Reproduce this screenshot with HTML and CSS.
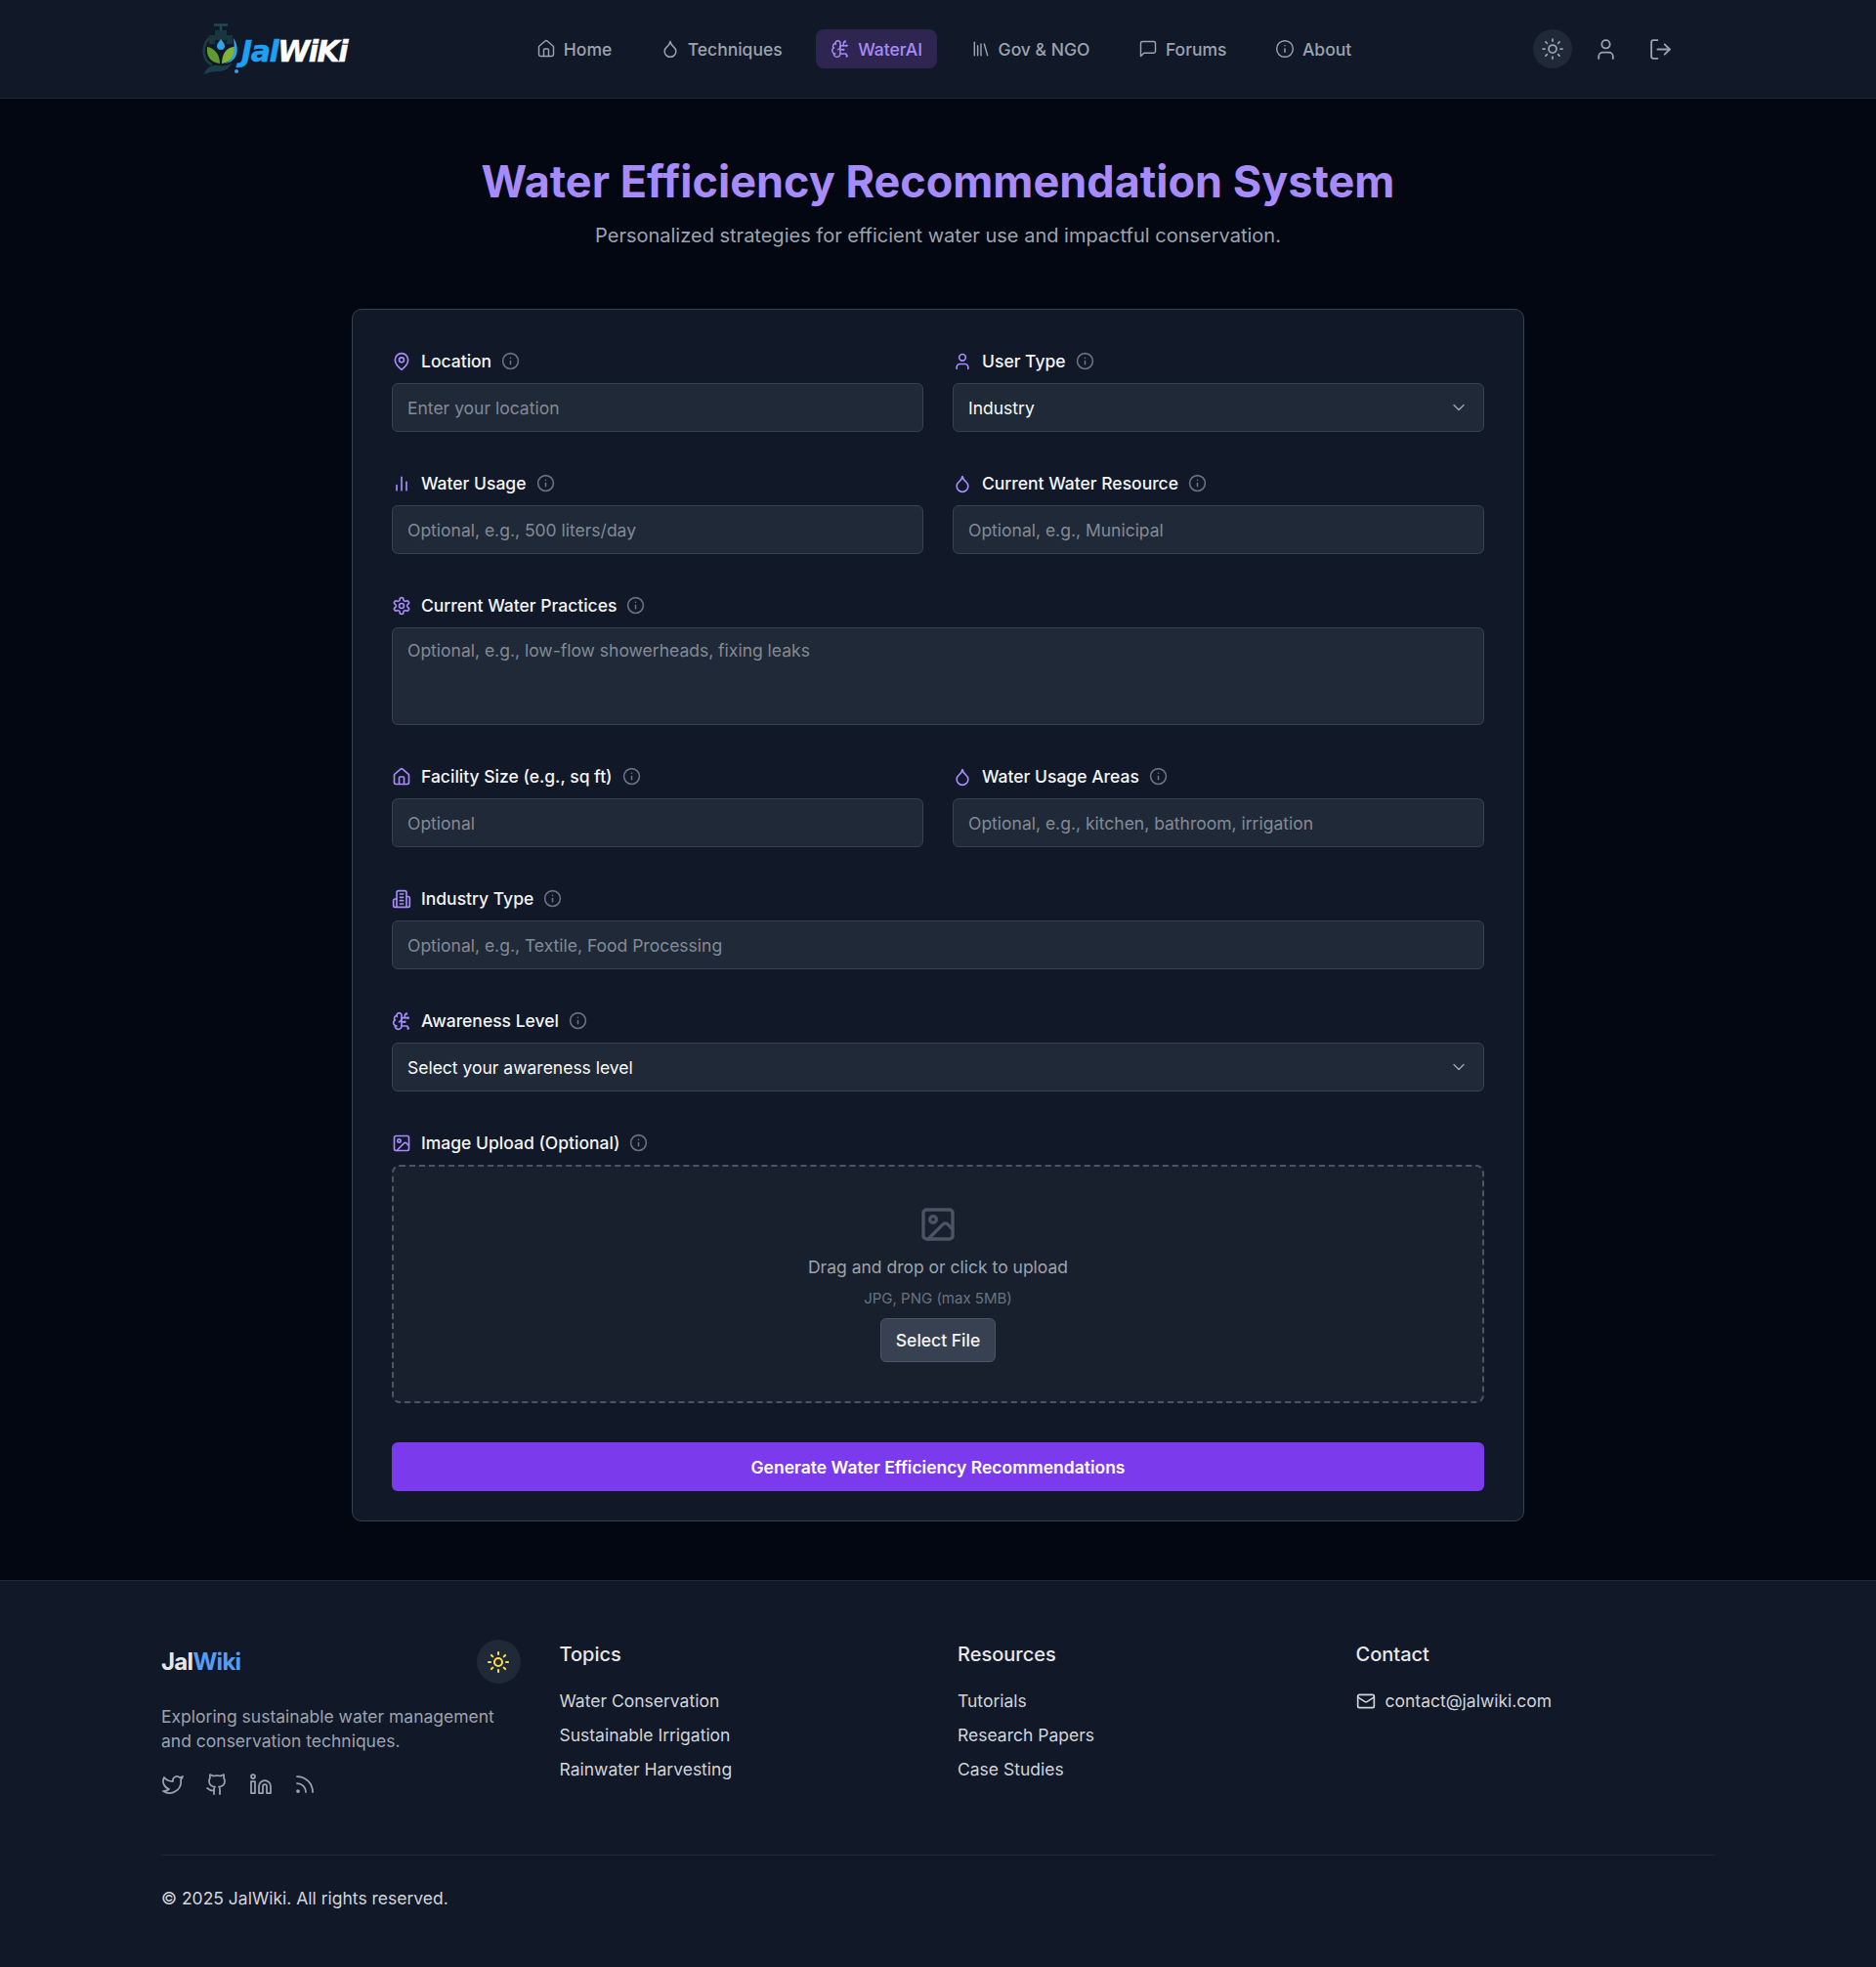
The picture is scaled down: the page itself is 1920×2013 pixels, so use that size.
FILE: index.html
```html
<!DOCTYPE html>
<html lang="en">
<head>
    <meta charset="UTF-8">
    <title>Water Efficiency Recommendation System</title>
    <link rel="stylesheet" href="styles.css">
</head>
<body>
    <svg class="sprite" width="0" height="0">
        <defs>
            <symbol id="i-home" viewBox="0 0 24 24"><path d="M15 21v-8a1 1 0 0 0-1-1h-4a1 1 0 0 0-1 1v8"/><path d="M3 10a2 2 0 0 1 .709-1.528l7-6a2 2 0 0 1 2.582 0l7 6A2 2 0 0 1 21 10v9a2 2 0 0 1-2 2H5a2 2 0 0 1-2-2z"/></symbol>
            <symbol id="i-drop" viewBox="0 0 24 24"><path d="M12 22a7 7 0 0 0 7-7c0-2-1-3.9-3-5.5s-3.5-4-4-6.5c-.5 2.5-2 4.9-4 6.5C6 11.1 5 13 5 15a7 7 0 0 0 7 7z"/></symbol>
            <symbol id="i-brain" viewBox="0 0 24 24"><path d="M12 5a3 3 0 1 0-5.997.125 4 4 0 0 0-2.526 5.77 4 4 0 0 0 .556 6.588A4 4 0 1 0 12 18Z"/><path d="M9 13a4.5 4.5 0 0 0 3-4"/><path d="M6.003 5.125A3 3 0 0 0 6.401 6.5"/><path d="M3.477 10.896a4 4 0 0 1 .585-.396"/><path d="M6 18a4 4 0 0 1-1.967-.516"/><path d="M12 13h4"/><path d="M12 18h6a2 2 0 0 1 2 2v1"/><path d="M12 8h8"/><path d="M16 8V5a2 2 0 0 1 2-2"/><circle cx="16" cy="13" r=".5"/><circle cx="18" cy="3" r=".5"/><circle cx="20" cy="21" r=".5"/><circle cx="20" cy="8" r=".5"/></symbol>
            <symbol id="i-library" viewBox="0 0 24 24"><path d="m16 6 4 14"/><path d="M12 6v14"/><path d="M8 8v12"/><path d="M4 4v16"/></symbol>
            <symbol id="i-chat" viewBox="0 0 24 24"><path d="M21 15a2 2 0 0 1-2 2H7l-4 4V5a2 2 0 0 1 2-2h14a2 2 0 0 1 2 2z"/></symbol>
            <symbol id="i-info" viewBox="0 0 24 24"><circle cx="12" cy="12" r="10"/><path d="M12 16v-4"/><path d="M12 8h.01"/></symbol>
            <symbol id="i-sun" viewBox="0 0 24 24"><circle cx="12" cy="12" r="4"/><path d="M12 2v2"/><path d="M12 20v2"/><path d="m4.93 4.93 1.41 1.41"/><path d="m17.66 17.66 1.41 1.41"/><path d="M2 12h2"/><path d="M20 12h2"/><path d="m6.34 17.66-1.41 1.41"/><path d="m19.07 4.93-1.41 1.41"/></symbol>
            <symbol id="i-user" viewBox="0 0 24 24"><path d="M19 21v-2a4 4 0 0 0-4-4H9a4 4 0 0 0-4 4v2"/><circle cx="12" cy="7" r="4"/></symbol>
            <symbol id="i-logout" viewBox="0 0 24 24"><path d="M9 21H5a2 2 0 0 1-2-2V5a2 2 0 0 1 2-2h4"/><path d="m16 17 5-5-5-5"/><path d="M21 12H9"/></symbol>
            <symbol id="i-pin" viewBox="0 0 24 24"><path d="M20 10c0 6-8 12-8 12s-8-6-8-12a8 8 0 0 1 16 0Z"/><circle cx="12" cy="10" r="3"/></symbol>
            <symbol id="i-bars" viewBox="0 0 24 24"><path d="M18 20V10"/><path d="M12 20V4"/><path d="M6 20v-6"/></symbol>
            <symbol id="i-gear" viewBox="0 0 24 24"><path d="M12.22 2h-.44a2 2 0 0 0-2 2v.18a2 2 0 0 1-1 1.73l-.43.25a2 2 0 0 1-2 0l-.15-.08a2 2 0 0 0-2.73.73l-.22.38a2 2 0 0 0 .73 2.73l.15.1a2 2 0 0 1 1 1.72v.51a2 2 0 0 1-1 1.74l-.15.09a2 2 0 0 0-.73 2.73l.22.38a2 2 0 0 0 2.73.73l.15-.08a2 2 0 0 1 2 0l.43.25a2 2 0 0 1 1 1.73V20a2 2 0 0 0 2 2h.44a2 2 0 0 0 2-2v-.18a2 2 0 0 1 1-1.73l.43-.25a2 2 0 0 1 2 0l.15.08a2 2 0 0 0 2.73-.73l.22-.39a2 2 0 0 0-.73-2.73l-.15-.08a2 2 0 0 1-1-1.74v-.5a2 2 0 0 1 1-1.74l.15-.09a2 2 0 0 0 .73-2.73l-.22-.38a2 2 0 0 0-2.73-.73l-.15.08a2 2 0 0 1-2 0l-.43-.25a2 2 0 0 1-1-1.73V4a2 2 0 0 0-2-2z"/><circle cx="12" cy="12" r="3"/></symbol>
            <symbol id="i-building" viewBox="0 0 24 24"><path d="M6 22V4a2 2 0 0 1 2-2h8a2 2 0 0 1 2 2v18Z"/><path d="M6 12H4a2 2 0 0 0-2 2v6a2 2 0 0 0 2 2h2"/><path d="M18 9h2a2 2 0 0 1 2 2v9a2 2 0 0 1-2 2h-2"/><path d="M10 6h4"/><path d="M10 10h4"/><path d="M10 14h4"/><path d="M10 18h4"/></symbol>
            <symbol id="i-image" viewBox="0 0 24 24"><rect x="3" y="3" width="18" height="18" rx="2"/><circle cx="9" cy="9" r="2"/><path d="m21 15-3.086-3.086a2 2 0 0 0-2.828 0L6 21"/></symbol>
            <symbol id="i-chevron" viewBox="0 0 24 24"><path d="m6 9 6 6 6-6"/></symbol>
            <symbol id="i-twitter" viewBox="0 0 24 24"><path d="M22 4s-.7 2.1-2 3.4c1.6 10-9.4 17.3-18 11.6 2.2.1 4.4-.6 6-2C3 15.5.5 9.6 3 5c2.2 2.6 5.6 4.1 9 4-.9-4.2 4-6.6 7-3.8 1.1 0 3-1.2 3-1.2z"/></symbol>
            <symbol id="i-github" viewBox="0 0 24 24"><path d="M15 22v-4a4.8 4.8 0 0 0-1-3.5c3 0 6-2 6-5.5.08-1.25-.27-2.48-1-3.5.28-1.15.28-2.35 0-3.5 0 0-1 0-3 1.5-2.64-.5-5.36-.5-8 0C6 2 5 2 5 2c-.3 1.15-.3 2.35 0 3.5A5.403 5.403 0 0 0 4 9c0 3.5 3 5.5 6 5.5-.39.49-.68 1.05-.85 1.65-.17.6-.22 1.23-.15 1.85v4"/><path d="M9 18c-4.51 2-5-2-7-2"/></symbol>
            <symbol id="i-linkedin" viewBox="0 0 24 24"><path d="M16 8a6 6 0 0 1 6 6v7h-4v-7a2 2 0 0 0-2-2 2 2 0 0 0-2 2v7h-4v-7a6 6 0 0 1 6-6z"/><rect x="2" y="9" width="4" height="12"/><circle cx="4" cy="4" r="2"/></symbol>
            <symbol id="i-rss" viewBox="0 0 24 24"><path d="M4 11a9 9 0 0 1 9 9"/><path d="M4 4a16 16 0 0 1 16 16"/><circle cx="5" cy="19" r="1"/></symbol>
            <symbol id="i-mail" viewBox="0 0 24 24"><rect x="2" y="4" width="20" height="16" rx="2"/><path d="m22 7-8.97 5.7a1.94 1.94 0 0 1-2.06 0L2 7"/></symbol>
        </defs>
    </svg>

    <header class="site-header">
        <div class="header-inner">
            <a class="logo" href="#">
                <svg class="logo-mark" viewBox="0 0 40 56" width="40" height="56">
                    <path d="M13 3.500h14M20 3.500v6" stroke="#1f4a52" stroke-width="2.500" fill="none"/>
                    <path d="M14 9h12v5h6v9h-6v-4H14v4H8v-9h6z" fill="#17363d"/>
                    <path d="M8 17C3 22 1 30 4 37c1 3 4 6 7 7" fill="none" stroke="#1d3b44" stroke-width="2.500"/>
                    <path d="M20 18c2 3 4 4.500 4 7a4 4 0 0 1-8 0c0-2.500 2-4 4-7z" fill="#2aa5e8"/>
                    <path d="M19 43C9 42 5 35 6 26c7 1 13 7 13 17z" fill="#5f9a2e"/>
                    <path d="M21 43c0-10 5-17 13-17 1 8-3 16-13 17z" fill="#7fb33a"/>
                    <path d="M3 54c2-7 8-10 14-9 6 1 11 0 14-3-2 7-8 9-14 9-5 0-9 1-14 3z" fill="#1a3f49"/>
                    <path d="M24 43c8-3 11-10 9-26 6 9 6 24-9 26z" fill="#2aa5e8"/>
                    <circle cx="36" cy="51" r="2" fill="#2aa5e8"/>
                </svg>
                <span class="logo-text"><span class="logo-jal">Jal</span>WiKi</span>
            </a>
            <nav class="main-nav">
                <a class="nav-link" href="#"><svg class="icon"><use href="#i-home"/></svg>Home</a>
                <a class="nav-link" href="#"><svg class="icon"><use href="#i-drop"/></svg>Techniques</a>
                <a class="nav-link active" href="#"><svg class="icon"><use href="#i-brain"/></svg>WaterAI</a>
                <a class="nav-link" href="#"><svg class="icon"><use href="#i-library"/></svg>Gov &amp; NGO</a>
                <a class="nav-link" href="#"><svg class="icon"><use href="#i-chat"/></svg>Forums</a>
                <a class="nav-link" href="#"><svg class="icon"><use href="#i-info"/></svg>About</a>
            </nav>
            <div class="header-actions">
                <button class="theme-btn" type="button"><svg class="icon"><use href="#i-sun"/></svg></button>
                <a class="action-link" href="#"><svg class="icon"><use href="#i-user"/></svg></a>
                <a class="action-link" href="#"><svg class="icon"><use href="#i-logout"/></svg></a>
            </div>
        </div>
    </header>

    <main class="page-main">
        <h1 class="page-title">Water Efficiency Recommendation System</h1>
        <p class="page-subtitle">Personalized strategies for efficient water use and impactful conservation.</p>

        <form class="rec-form">
            <div class="form-grid">
                <div class="field">
                    <label class="field-label"><svg class="icon label-icon"><use href="#i-pin"/></svg>Location<svg class="icon info-icon"><use href="#i-info"/></svg></label>
                    <input class="control" type="text" placeholder="Enter your location">
                </div>
                <div class="field">
                    <label class="field-label"><svg class="icon label-icon"><use href="#i-user"/></svg>User Type<svg class="icon info-icon"><use href="#i-info"/></svg></label>
                    <div class="select-wrap">
                        <select class="control">
                            <option>Industry</option>
                        </select>
                        <svg class="icon select-arrow"><use href="#i-chevron"/></svg>
                    </div>
                </div>
                <div class="field">
                    <label class="field-label"><svg class="icon label-icon"><use href="#i-bars"/></svg>Water Usage<svg class="icon info-icon"><use href="#i-info"/></svg></label>
                    <input class="control" type="text" placeholder="Optional, e.g., 500 liters/day">
                </div>
                <div class="field">
                    <label class="field-label"><svg class="icon label-icon"><use href="#i-drop"/></svg>Current Water Resource<svg class="icon info-icon"><use href="#i-info"/></svg></label>
                    <input class="control" type="text" placeholder="Optional, e.g., Municipal">
                </div>
                <div class="field span-2">
                    <label class="field-label"><svg class="icon label-icon"><use href="#i-gear"/></svg>Current Water Practices<svg class="icon info-icon"><use href="#i-info"/></svg></label>
                    <textarea class="control control-area" placeholder="Optional, e.g., low-flow showerheads, fixing leaks"></textarea>
                </div>
                <div class="field">
                    <label class="field-label"><svg class="icon label-icon"><use href="#i-home"/></svg>Facility Size (e.g., sq ft)<svg class="icon info-icon"><use href="#i-info"/></svg></label>
                    <input class="control" type="text" placeholder="Optional">
                </div>
                <div class="field">
                    <label class="field-label"><svg class="icon label-icon"><use href="#i-drop"/></svg>Water Usage Areas<svg class="icon info-icon"><use href="#i-info"/></svg></label>
                    <input class="control" type="text" placeholder="Optional, e.g., kitchen, bathroom, irrigation">
                </div>
                <div class="field span-2">
                    <label class="field-label"><svg class="icon label-icon"><use href="#i-building"/></svg>Industry Type<svg class="icon info-icon"><use href="#i-info"/></svg></label>
                    <input class="control" type="text" placeholder="Optional, e.g., Textile, Food Processing">
                </div>
                <div class="field span-2">
                    <label class="field-label"><svg class="icon label-icon"><use href="#i-brain"/></svg>Awareness Level<svg class="icon info-icon"><use href="#i-info"/></svg></label>
                    <div class="select-wrap">
                        <select class="control">
                            <option>Select your awareness level</option>
                        </select>
                        <svg class="icon select-arrow"><use href="#i-chevron"/></svg>
                    </div>
                </div>
                <div class="field span-2">
                    <label class="field-label"><svg class="icon label-icon"><use href="#i-image"/></svg>Image Upload (Optional)<svg class="icon info-icon"><use href="#i-info"/></svg></label>
                    <div class="upload-box">
                        <svg class="icon upload-icon"><use href="#i-image"/></svg>
                        <p class="upload-text">Drag and drop or click to upload</p>
                        <p class="upload-hint">JPG, PNG (max 5MB)</p>
                        <button class="upload-btn" type="button">Select File</button>
                    </div>
                </div>
            </div>
            <button class="submit-btn" type="submit">Generate Water Efficiency Recommendations</button>
        </form>
    </main>

    <footer class="site-footer">
        <div class="footer-grid">
            <div class="footer-about">
                <div class="footer-brand">
                    <span class="footer-logo">Jal<span class="footer-logo-blue">Wiki</span></span>
                    <button class="theme-btn theme-btn-footer" type="button"><svg class="icon"><use href="#i-sun"/></svg></button>
                </div>
                <p class="footer-desc">Exploring sustainable water management and conservation techniques.</p>
                <div class="social-links">
                    <a href="#"><svg class="icon"><use href="#i-twitter"/></svg></a>
                    <a href="#"><svg class="icon"><use href="#i-github"/></svg></a>
                    <a href="#"><svg class="icon"><use href="#i-linkedin"/></svg></a>
                    <a href="#"><svg class="icon"><use href="#i-rss"/></svg></a>
                </div>
            </div>
            <div class="footer-col">
                <h3>Topics</h3>
                <a href="#">Water Conservation</a>
                <a href="#">Sustainable Irrigation</a>
                <a href="#">Rainwater Harvesting</a>
            </div>
            <div class="footer-col">
                <h3>Resources</h3>
                <a href="#">Tutorials</a>
                <a href="#">Research Papers</a>
                <a href="#">Case Studies</a>
            </div>
            <div class="footer-col">
                <h3>Contact</h3>
                <a class="footer-mail" href="#"><svg class="icon"><use href="#i-mail"/></svg>contact@jalwiki.com</a>
            </div>
        </div>
        <div class="footer-bottom">© 2025 JalWiki. All rights reserved.</div>
    </footer>
</body>
</html>
```

FILE: styles.css
```css
* {
    box-sizing: border-box;
}

body {
    margin: 0;
    font-family: Inter, "Noto Sans", sans-serif;
    font-size: 17.5px;
    background-color: #030712;
    color: #f3f4f6;
}

a {
    color: inherit;
    text-decoration: none;
}

.sprite {
    position: absolute;
}

.icon {
    width: 18px;
    height: 18px;
    fill: none;
    stroke: currentColor;
    stroke-width: 2;
    stroke-linecap: round;
    stroke-linejoin: round;
    flex-shrink: 0;
}

/* header */
.site-header {
    height: 101px;
    background-color: #111827;
    border-bottom: 1px solid #1f2937;
}

.header-inner {
    max-width: 1536px;
    height: 100px;
    margin: 0 auto;
    padding: 0 16px;
    display: flex;
    align-items: center;
    justify-content: space-between;
}

.logo {
    display: flex;
    align-items: center;
    width: 157px;
    margin-left: -2px;
}

.logo-text {
    font-family: "DejaVu Sans", sans-serif;
    font-size: 30px;
    font-weight: 700;
    font-style: italic;
    letter-spacing: -1.5px;
    -webkit-text-stroke: .5px currentColor;
    color: #fff;
    margin: 4px 0 0 1px;
}

.logo-jal {
    color: #1da1f2;
}

.main-nav {
    display: flex;
    gap: 19.5px;
}

.nav-link {
    display: flex;
    align-items: center;
    gap: 8px;
    height: 40px;
    padding: 0 15px;
    border-radius: 8px;
    font-weight: 500;
    color: #9ca3af;
}

.nav-link .icon {
    width: 20px;
    height: 20px;
    stroke-width: 1.75;
}

.nav-link.active {
    background-color: #2e2650;
    color: #a78bfa;
}

.header-actions {
    display: flex;
    align-items: center;
    gap: 22px;
    color: #9ca3af;
}

.action-link {
    display: flex;
}

.action-link + .action-link {
    margin-left: 9px;
}

.action-link .icon {
    width: 25px;
    height: 25px;
    stroke-width: 1.75;
}

.theme-btn {
    width: 40px;
    height: 40px;
    border: none;
    border-radius: 50%;
    background-color: #1f2937;
    color: #9ca3af;
    display: flex;
    align-items: center;
    justify-content: center;
    padding: 0;
}

.theme-btn .icon {
    width: 24px;
    height: 24px;
    stroke-width: 1.75;
}

.theme-btn-footer {
    width: 45px;
    height: 45px;
    color: #fde047;
}

.theme-btn-footer .icon {
    stroke-width: 2;
}

/* main */
.page-main {
    padding: 60px 0;
    background-color: #030712;
}

.page-title {
    margin: 0;
    text-align: center;
    font-size: 45px;
    line-height: 50px;
    font-weight: 700;
    color: #a78bfa;
}

.page-subtitle {
    margin: 16px 0 61px;
    text-align: center;
    font-size: 20px;
    line-height: 28px;
    color: #9ca3af;
}

.rec-form {
    width: 1200px;
    margin: 0 auto;
    padding: 40px 40px 30px;
    background-color: #111827;
    border: 1px solid #374151;
    border-radius: 10px;
}

.form-grid {
    display: grid;
    grid-template-columns: 1fr 1fr;
    gap: 40px 30px;
}

.span-2 {
    grid-column: span 2;
}

.field-label {
    display: flex;
    align-items: center;
    height: 25px;
    margin-bottom: 10px;
    font-weight: 500;
    color: #f3f4f6;
}

.label-icon {
    width: 20px;
    height: 20px;
    margin: 0 10px 0 0;
    color: #a78bfa;
}

.info-icon {
    width: 19px;
    height: 19px;
    margin-left: 10px;
    color: #6b7280;
}

.control {
    display: block;
    width: 100%;
    height: 50px;
    padding: 0 15px;
    background-color: #1f2937;
    border: 1px solid #374151;
    border-radius: 6px;
    color: #f9fafb;
    font-family: inherit;
    font-size: 17.5px;
}

.control::placeholder {
    color: #9ca3af;
    opacity: .8;
}

.control-area {
    height: 100px;
    padding: 11px 15px;
    line-height: 24px;
    resize: none;
}

select.control {
    appearance: none;
}

.select-wrap {
    position: relative;
}

.select-arrow {
    position: absolute;
    right: 16px;
    top: 15px;
    width: 20px;
    height: 20px;
    color: #9ca3af;
    stroke-width: 1.75;
}

.upload-box {
    height: 244px;
    display: flex;
    flex-direction: column;
    align-items: center;
    padding-top: 39px;
    background-color: #18202d;
    border: 2px dashed #4b5563;
    border-radius: 8px;
}

.upload-icon {
    width: 40px;
    height: 40px;
    color: #4b5563;
}

.upload-text {
    margin: 12px 0 0;
    line-height: 24px;
    color: #9ca3af;
}

.upload-hint {
    margin: 10px 0 0;
    font-size: 15px;
    line-height: 20px;
    color: #6b7280;
}

.upload-btn {
    height: 45px;
    margin-top: 10px;
    padding: 0 15px;
    background-color: #374151;
    border: 1px solid #4b5563;
    border-radius: 6px;
    color: #f3f4f6;
    font-family: inherit;
    font-size: 17.5px;
    font-weight: 500;
}

.submit-btn {
    display: block;
    width: 100%;
    height: 50px;
    margin-top: 40px;
    background-color: #7c3aed;
    border: none;
    border-radius: 6px;
    color: #fff;
    font-family: inherit;
    font-size: 17.5px;
    font-weight: 600;
}

/* footer */
.site-footer {
    padding: 60px 165px 0;
    height: 396px;
    background-color: #111827;
    border-top: 1px solid #1f2937;
}

.footer-grid {
    display: grid;
    grid-template-columns: repeat(4, 1fr);
    gap: 40px;
}

.footer-brand {
    display: flex;
    align-items: center;
    justify-content: space-between;
}

.footer-logo {
    font-size: 24px;
    font-weight: 700;
    letter-spacing: -.7px;
    color: #e5e7eb;
}

.footer-logo-blue {
    color: #559cf9;
}

.footer-desc {
    margin: 21px 0 0;
    line-height: 25px;
    color: #9ca3af;
}

.social-links {
    display: flex;
    gap: 21px;
    margin-top: 20px;
    color: #9ca3af;
}

.social-links a {
    display: flex;
}

.social-links .icon {
    width: 24px;
    height: 24px;
    stroke-width: 1.75;
}

.footer-col {
    display: flex;
    flex-direction: column;
    align-items: flex-start;
}

.footer-col h3 {
    margin: 1px 0 16px;
    font-size: 20px;
    line-height: 28px;
    font-weight: 500;
    color: #e5e7eb;
}

.footer-col a {
    display: flex;
    align-items: center;
    height: 35px;
    color: #d1d5db;
}

.footer-mail .icon {
    width: 20px;
    height: 20px;
    margin-right: 10px;
}

.footer-bottom {
    margin-top: 60px;
    padding-top: 31px;
    border-top: 1px solid #1f2937;
    line-height: 25px;
    color: #d1d5db;
}
```
